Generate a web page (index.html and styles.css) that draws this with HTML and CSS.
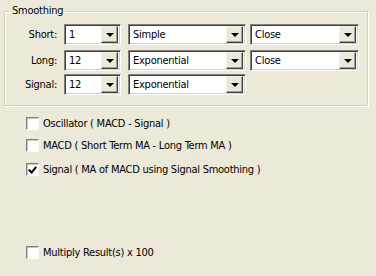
FILE: index.html
```html
<!DOCTYPE html>
<html lang="en">
<head>
    <meta charset="UTF-8">
    <title>MACD settings</title>
    <link rel="stylesheet" href="styles.css">
</head>
<body>

    <fieldset class="group">
        <legend>Smoothing</legend>

        <div class="row">
            <span class="row-label">Short:</span>
            <div class="combo combo-num"><span class="combo-text">1</span><span class="combo-btn"></span></div>
            <div class="combo combo-type"><span class="combo-text">Simple</span><span class="combo-btn"></span></div>
            <div class="combo combo-field"><span class="combo-text">Close</span><span class="combo-btn"></span></div>
        </div>

        <div class="row row-long">
            <span class="row-label">Long:</span>
            <div class="combo combo-num"><span class="combo-text">12</span><span class="combo-btn"></span></div>
            <div class="combo combo-type"><span class="combo-text">Exponential</span><span class="combo-btn"></span></div>
            <div class="combo combo-field"><span class="combo-text">Close</span><span class="combo-btn"></span></div>
        </div>

        <div class="row row-signal">
            <span class="row-label">Signal:</span>
            <div class="combo combo-num"><span class="combo-text">12</span><span class="combo-btn"></span></div>
            <div class="combo combo-type"><span class="combo-text">Exponential</span><span class="combo-btn"></span></div>
        </div>
    </fieldset>

    <div class="checks">
        <label class="check"><span class="box"></span>Oscillator ( MACD - Signal )</label>
        <label class="check"><span class="box"></span>MACD ( Short Term MA - Long Term MA )</label>
        <label class="check"><span class="box checked"></span>Signal ( MA of MACD using Signal Smoothing )</label>
        <label class="check check-last"><span class="box"></span>Multiply Result(s) x 100</label>
    </div>

</body>
</html>
```

FILE: styles.css
```css
body {
    font-family: "DejaVu Sans Condensed", "DejaVu Sans", sans-serif;
    font-size: 11px;
    letter-spacing: -0.25px;
    color: #000;
    background-color: #ece9d8;
    margin: 0;
    padding: 0;
    width: 376px;
    height: 276px;
    overflow: hidden;
}

.group {
    margin: 4px 4px 0 4px;
    padding: 6px 0 10px 0;
    border: 1px solid #d0d0bf;
    box-shadow: inset 1px 1px 0 #fff, 1px 1px 0 #fff;
    width: 364px;
    box-sizing: border-box;
    min-width: 0;
}

.group legend {
    margin-left: 4px;
    padding: 0 3px;
    line-height: 14px;
    font-size: 11px;
}

.row {
    display: flex;
    align-items: center;
    height: 21px;
}

.row-long {
    margin-top: 5px;
}

.row-signal {
    margin-top: 3px;
}

.row-label {
    width: 52px;
    text-align: right;
    margin-right: 7px;
}

.combo {
    display: flex;
    align-items: center;
    height: 21px;
    box-sizing: border-box;
    background-color: #fff;
    border-top: 1px solid #808080;
    border-left: 1px solid #808080;
    border-right: 1px solid #fff;
    border-bottom: 1px solid #fff;
    box-shadow: inset 1px 1px 0 #404040, inset -1px -1px 0 #d4d0c8;
    padding: 2px;
}

.combo-num {
    width: 57px;
    margin-right: 7px;
}

.combo-type {
    width: 118px;
    margin-right: 4px;
}

.combo-field {
    width: 109px;
}

.combo-text {
    flex: 1;
    padding-left: 2px;
    white-space: nowrap;
    overflow: hidden;
}

.combo-btn {
    position: relative;
    width: 17px;
    height: 17px;
    box-sizing: border-box;
    background-color: #ece9d8;
    border-top: 1px solid #f4f2e8;
    border-left: 1px solid #f4f2e8;
    border-right: 1px solid #404040;
    border-bottom: 1px solid #404040;
    box-shadow: inset -1px -1px 0 #a09e93;
}

.combo-btn::after {
    content: "";
    position: absolute;
    left: 4px;
    top: 6px;
    border-left: 4px solid transparent;
    border-right: 4px solid transparent;
    border-top: 4px solid #000;
}

.checks {
    display: flex;
    flex-direction: column;
    padding-left: 26px;
    margin-top: 11px;
}

.check {
    display: flex;
    align-items: center;
    height: 13px;
    margin-bottom: 9px;
}

.check:nth-child(2) {
    margin-bottom: 11px;
}

.check-last {
    margin-top: 61px;
}

.box {
    position: relative;
    width: 13px;
    height: 13px;
    box-sizing: border-box;
    margin-right: 4px;
    background-color: #fff;
    border-top: 1px solid #808080;
    border-left: 1px solid #808080;
    border-right: 1px solid #fff;
    border-bottom: 1px solid #fff;
    box-shadow: inset 1px 1px 0 #c8c6bc;
}

.box.checked::after {
    content: "";
    position: absolute;
    left: 3px;
    top: 1px;
    width: 3px;
    height: 6px;
    border-right: 2px solid #000;
    border-bottom: 2px solid #000;
    transform: rotate(40deg);
}
```
